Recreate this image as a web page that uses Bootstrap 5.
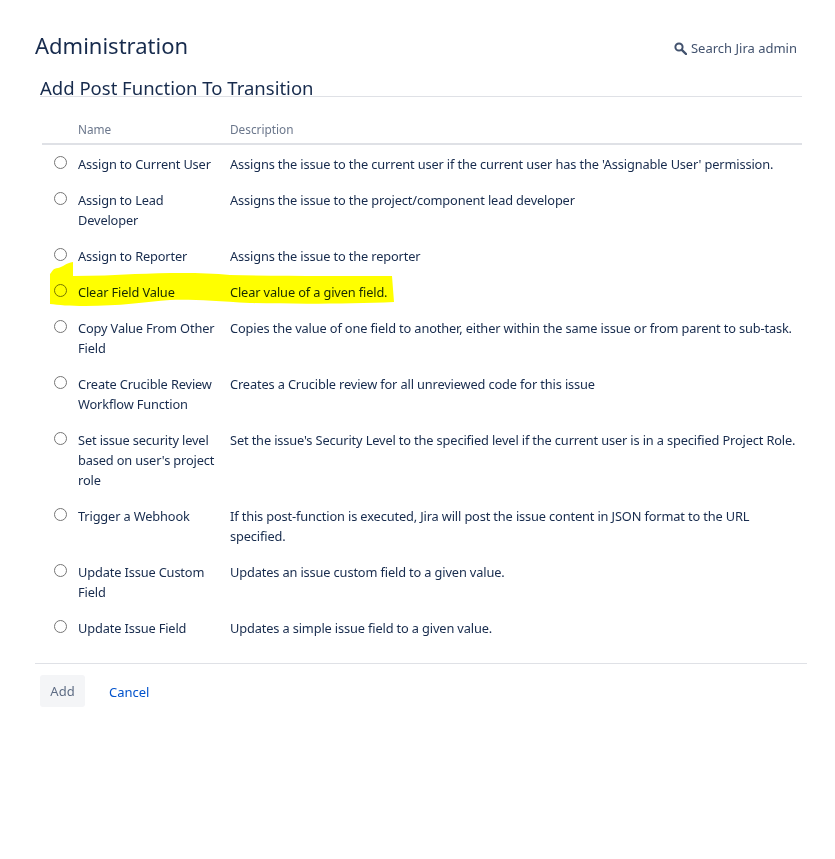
<!DOCTYPE html>
<html lang="en">
<head>
<meta charset="utf-8">
<title>Add Post Function To Transition</title>
<link href="https://cdn.jsdelivr.net/npm/bootstrap@5.3.0/dist/css/bootstrap.min.css" rel="stylesheet">
<style>
html,body{background:#fff;}
body{font-family:"Noto Sans","Open Sans",sans-serif;font-size:12.8px;letter-spacing:-.14px;line-height:20px;color:#172b4d;}
.pagewrap{position:relative;height:859px;padding:29px 28px 0 35px;overflow:hidden;}
.admin-title{font-size:22px;letter-spacing:0;line-height:32px;font-weight:400;margin:0;color:#172b4d;}
.admin-search{color:#42526e;font-size:13px;letter-spacing:0;line-height:20px;padding-right:10px;margin-top:9px;}
.flow-panel{padding-left:5px;padding-right:5px;}
.flow-title{font-size:18.5px;letter-spacing:0;line-height:24px;font-weight:400;margin:0;padding-top:4px;border-bottom:1px solid #dfe1e6;height:25px;margin-top:11px;}
.fn-table{width:760px;margin:22px 0 0 2px;table-layout:fixed;border-collapse:collapse;}
.fn-table th{font-weight:400;color:#6b778c;font-size:11.8px;letter-spacing:0;line-height:20px;padding:0 0 4px;border-bottom:2px solid #dfe1e6;height:24px;}
.fn-table td{padding:8px 0;vertical-align:top;color:#172b4d;line-height:20px;}
.fn-table tbody tr:first-child td{padding-top:9px;}
.col-radio{width:36px;}
.col-name{width:152px;}
.fn-table td.cell-name{padding-right:12px;}
.radio-dot{display:block;width:13px;height:13px;margin:2px 0 0 12px;border:1px solid #767676;border-radius:50%;background:transparent;appearance:none;-webkit-appearance:none;}
.form-foot{margin-top:17px;margin-right:-5px;border-top:1px solid #dfe1e6;padding:11px 0 0 5px;width:772px;}
.btn-add{background:#f4f5f7;color:#5e6c84;border:0;border-radius:3px;font-size:13px;letter-spacing:0;line-height:20px;padding:6px 10px;height:32px;width:45px;}
.btn-add:disabled{background:#f4f5f7;color:#5e6c84;opacity:1;}
.link-cancel{color:#0052cc;text-decoration:none;margin-left:24px;padding-top:2px;font-size:13px;letter-spacing:0;}
.marker-ink{position:absolute;left:0;top:0;width:835px;height:859px;mix-blend-mode:multiply;pointer-events:none;}
</style>
</head>
<body>
<div class="pagewrap">
  <div class="d-flex justify-content-between align-items-start">
    <h1 class="admin-title">Administration</h1>
    <div class="admin-search d-flex align-items-center gap-1">
      <svg width="13" height="13" viewBox="0 0 13 13" aria-hidden="true"><circle cx="5" cy="5" r="3.6" fill="none" stroke="#42526e" stroke-width="2"/><path d="M7.8 7.8L12 12" stroke="#42526e" stroke-width="2.4" stroke-linecap="round"/></svg>
      <span>Search Jira admin</span>
    </div>
  </div>
  <div class="flow-panel">
    <h2 class="flow-title">Add Post Function To Transition</h2>
    <table class="fn-table">
      <thead>
        <tr><th class="col-radio"></th><th class="col-name">Name</th><th>Description</th></tr>
      </thead>
      <tbody>
        <tr><td><input class="radio-dot" type="radio" name="fn"></td><td class="cell-name">Assign to Current User</td><td>Assigns the issue to the current user if the current user has the 'Assignable User' permission.</td></tr>
        <tr><td><input class="radio-dot" type="radio" name="fn"></td><td class="cell-name">Assign to Lead Developer</td><td>Assigns the issue to the project/component lead developer</td></tr>
        <tr><td><input class="radio-dot" type="radio" name="fn"></td><td class="cell-name">Assign to Reporter</td><td>Assigns the issue to the reporter</td></tr>
        <tr><td><input class="radio-dot" type="radio" name="fn"></td><td class="cell-name">Clear Field Value</td><td>Clear value of a given field.</td></tr>
        <tr><td><input class="radio-dot" type="radio" name="fn"></td><td class="cell-name">Copy Value From Other Field</td><td>Copies the value of one field to another, either within the same issue or from parent to sub-task.</td></tr>
        <tr><td><input class="radio-dot" type="radio" name="fn"></td><td class="cell-name">Create Crucible Review Workflow Function</td><td>Creates a Crucible review for all unreviewed code for this issue</td></tr>
        <tr><td><input class="radio-dot" type="radio" name="fn"></td><td class="cell-name">Set issue security level based on user's project role</td><td>Set the issue's Security Level to the specified level if the current user is in a specified Project Role.</td></tr>
        <tr><td><input class="radio-dot" type="radio" name="fn"></td><td class="cell-name">Trigger a Webhook</td><td>If this post-function is executed, Jira will post the issue content in JSON format to the URL specified.</td></tr>
        <tr><td><input class="radio-dot" type="radio" name="fn"></td><td class="cell-name">Update Issue Custom Field</td><td>Updates an issue custom field to a given value.</td></tr>
        <tr><td><input class="radio-dot" type="radio" name="fn"></td><td class="cell-name">Update Issue Field</td><td>Updates a simple issue field to a given value.</td></tr>
      </tbody>
    </table>
  </div>
  <div class="form-foot d-flex align-items-center">
    <button class="btn btn-add" type="button" disabled>Add</button>
    <a class="link-cancel" href="#">Cancel</a>
  </div>
  <svg class="marker-ink" viewBox="0 0 835 859" aria-hidden="true"><path fill="#ffff00" d="M73 262L73 276C95 276 115 275 135 274C165 273 200 272 230 275C280 276 340 276 392 276L394 302C350 304 290 304 250 303C215 301 190 299 170 300C145 302 120 306 85 306C70 306 58 305 50 304L50 274C52 272 53 268 58 268C63 267 66 263 73 262Z"/></svg>
</div>
<script src="https://cdn.jsdelivr.net/npm/bootstrap@5.3.0/dist/js/bootstrap.bundle.min.js"></script>
</body>
</html>
